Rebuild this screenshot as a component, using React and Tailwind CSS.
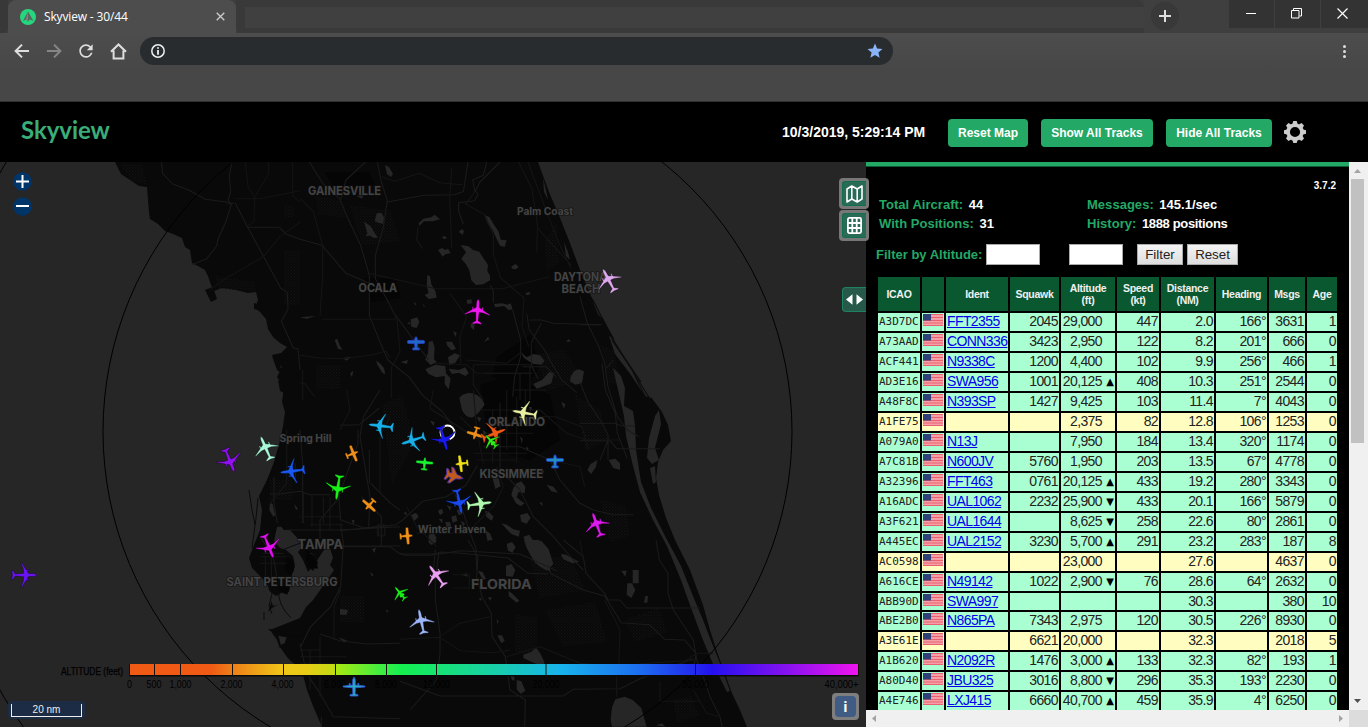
import React from "react";
import { MdRefresh, MdStar } from "react-icons/md";

const ROWS = [
  ["A3D7DC", "FFT2355", "2045", "29,000", "", "447", "2.0", "166°", "3631", "1"],
  ["A73AAD", "CONN336", "3423", "2,950", "", "122", "8.2", "201°", "666", "0"],
  ["ACF441", "N9338C", "1200", "4,400", "", "102", "9.9", "256°", "466", "1"],
  ["AD3E16", "SWA956", "1001", "20,125", "▲", "408", "10.3", "251°", "2544", "0"],
  ["A48F8C", "N393SP", "1427", "9,425", "", "103", "11.4", "7°", "4043", "0"],
  ["A1FE75", "", "", "2,375", "", "82", "12.8", "106°", "1253", "0"],
  ["A079A0", "N13J", "", "7,950", "", "184", "13.4", "320°", "1174", "0"],
  ["A7C81B", "N600JV", "5760", "1,950", "", "203", "13.5", "67°", "4778", "0"],
  ["A32396", "FFT463", "0761", "20,125", "▲", "433", "19.2", "280°", "3343", "0"],
  ["A16ADC", "UAL1062", "2232", "25,900", "▼", "433", "20.1", "166°", "5879", "0"],
  ["A3F621", "UAL1644", "", "8,625", "▼", "258", "22.6", "80°", "2861", "0"],
  ["A445EC", "UAL2152", "3230", "5,700", "▲", "291", "23.2", "283°", "187", "8"],
  ["AC0598", "", "", "23,000", "", "", "27.6", "", "4637", "0"],
  ["A616CE", "N49142", "1022", "2,900", "▼", "76", "28.6", "64°", "2632", "0"],
  ["ABB90D", "SWA997", "", "", "", "", "30.3", "", "380", "10"],
  ["ABE2B0", "N865PA", "7343", "2,975", "", "120", "30.5", "226°", "8930", "0"],
  ["A3E61E", "", "6621", "20,000", "", "", "32.3", "", "2018", "5"],
  ["A1B620", "N2092R", "1476", "3,000", "▲", "133", "32.3", "82°", "193", "1"],
  ["A80D40", "JBU325", "3016", "8,800", "▼", "296", "35.3", "193°", "2230", "0"],
  ["A4E746", "LXJ415", "6660", "40,700", "▲", "459", "35.9", "4°", "6250", "0"],
];

const HEADS = [["ICAO"], [""], ["Ident"], ["Squawk"], ["Altitude", "(ft)"], ["Speed", "(kt)"], ["Distance", "(NM)"], ["Heading"], ["Msgs"], ["Age"]];
const GRID = "grid grid-cols-[42px_22px_62px_49px_54px_42px_53px_51px_36px_30px] gap-x-[2px]";

const JET =
  "M0,-13 C1.1,-12 1.5,-10 1.5,-8 L1.6,-4.6 L4.2,-3 L4.2,-5 L5.5,-5 L5.5,-2.1 L12.6,2.2 L12.6,3.2 L5.5,.6 L1.7,.4 L1.1,8.8 L4.6,10.9 L4.6,12.2 L0,11.6 L-4.6,12.2 L-4.6,10.9 L-1.1,8.8 L-1.7,.4 L-5.5,.6 L-12.6,3.2 L-12.6,2.2 L-5.5,-2.1 L-5.5,-5 L-4.2,-5 L-4.2,-3 L-1.6,-4.6 L-1.5,-8 C-1.5,-10 -1.1,-12 0,-13Z";
const PROP =
  "M-.7,-6.5 L.7,-6.5 L1.5,-3.2 L8,-3 L8.7,-1.8 L8.2,-.2 L1.5,.2 L1,4.2 L3.2,4.6 L3.2,6.4 L-3.2,6.4 L-3.2,4.6 L-1,4.2 L-1.5,.2 L-8.2,-.2 L-8.7,-1.8 L-8,-3 L-1.5,-3.2Z";
const FIGHTER =
  "M0,-9.5 L1.6,-6 L2.2,-2.5 L8,2.4 L8,4.6 L2.6,2.8 L2.2,5 L5.4,7 L5.4,9 L0,7.6 L-5.4,9 L-5.4,7 L-2.2,5 L-2.6,2.8 L-8,4.6 L-8,2.4 L-2.2,-2.5 L-1.6,-6Z";
const BIZJET =
  "M0,-8.5 L1,-6 L1.1,-2 L8.6,1.6 L8.6,2.6 L1.2,.9 L2.6,2.2 L2.6,4.4 L1.1,4.4 L1,6 L3.6,7.2 L3.6,8.3 L0,7.6 L-3.6,8.3 L-3.6,7.2 L-1,6 L-1.1,4.4 L-2.6,4.4 L-2.6,2.2 L-1.2,.9 L-8.6,2.6 L-8.6,1.6 L-1.1,-2 L-1,-6Z";
const TWIN =
  "M0,-9.5 L1.2,-7 L1.3,-1.4 L3.8,-1.2 L3.8,-3 L4.8,-3 L4.8,-1.1 L11,-.4 L11,.4 L4.8,1 L1.3,1.2 L1.1,7.6 L4,8.2 L4,9.4 L0,9.6 L-4,9.4 L-4,8.2 L-1.1,7.6 L-1.3,1.2 L-4.8,1 L-11,.4 L-11,-.4 L-4.8,-1.1 L-4.8,-3 L-3.8,-3 L-3.8,-1.2 L-1.3,-1.4 L-1.2,-7Z";

const PLANES = [
  [JET, 477.5, 312, 3, "#f016f0"],
  [PROP, 416, 343.5, 0, "#2068c8", "#2a40c0"],
  [JET, 609, 280.5, 332, "#e0a8ee"],
  [JET, 525, 413, 280, "#e8f0a0"],
  [JET, 381.5, 426, 277, "#18b0e8"],
  [JET, 413.5, 440, 252, "#18b0e8"],
  [JET, 443.5, 438, 164, "#1818f0"],
  [PROP, 475.5, 433, 197, "#f09018"],
  [JET, 493.5, 434, 69, "#f05a14"],
  [BIZJET, 491, 441, 318, "#30f018"],
  [PROP, 424.5, 464, 5, "#18f030"],
  [PROP, 462, 463.5, 262, "#f0e018"],
  [FIGHTER, 454, 476, 105, "#c05a1c", "#5030a0"],
  [JET, 459, 501, 168, "#1848f0"],
  [JET, 479, 504, 82, "#b0f8b0"],
  [PROP, 555, 461.5, 0, "#2090c0", "#2040c8"],
  [JET, 597, 525, 340, "#e018f0"],
  [PROP, 406, 536, 85, "#f09018"],
  [PROP, 370, 504.5, 222, "#f09018"],
  [PROP, 352, 454, 68, "#f09018"],
  [JET, 338, 487, 188, "#18f018"],
  [JET, 293, 471, 263, "#1858f0"],
  [JET, 266, 448.5, 336, "#a8f8d8"],
  [JET, 229.5, 460, 158, "#9010f0"],
  [JET, 268.5, 546, 158, "#e010f0"],
  [JET, 24, 575, 90, "#6a14f0"],
  [JET, 437, 576, 324, "#eaa0f0"],
  [JET, 421.5, 622, 348, "#9cb4f8"],
  [BIZJET, 400, 593, 320, "#18f018"],
  [TWIN, 354, 686.5, 0, "#28b0c0", "#3058d8"],
];

const LABELS = [
  ["GAINESVILLE", 308, 195, 73, 12],
  ["Palm Coast", 517, 215, 56, 10],
  ["OCALA", 358.5, 292, 38.5, 12],
  ["DAYTONA", 554, 281, 53, 11.5],
  ["BEACH", 561.5, 293, 39, 11.5],
  ["ORLANDO", 488, 426, 57, 12],
  ["KISSIMMEE", 479.5, 478, 63.5, 12],
  ["Spring Hill", 279.5, 442, 52, 10],
  ["Winter Haven", 418, 533, 68, 10.5],
  ["TAMPA", 297.5, 549, 45.5, 13],
  ["SAINT PETERSBURG", 226.5, 586, 111, 11.5],
  ["FLORIDA", 471, 589, 60.5, 13.5],
];

const TICKS = [
  ["0", 129.5, 129.5],
  ["500", 154.5, 154],
  ["1,000", 180.5, 180.5],
  ["2,000", 232.5, 231.5],
  ["4,000", 283.5, 282.5],
  ["6,000", 335.5, 335],
  ["8,000", 386.5, 386],
  ["10,000", 436.5, 436.5],
  ["20,000", 546, 546],
  ["30,000", 695.5, 695.5],
  ["40,000+", 858.5, 841.5],
];

function MapDrawing() {
  return (
    <svg className="block h-[565px] w-[866px]" viewBox="0 162 866 565" fontFamily="Inter, sans-serif">
      <defs>
        <pattern id="marsh" width="3" height="3" patternUnits="userSpaceOnUse">
          <rect x="0" y="0" width="1" height="1" fill="#141414" />
          <rect x="1.5" y="1.5" width="1" height="1" fill="#121212" />
        </pattern>
        <linearGradient id="alt" gradientUnits="userSpaceOnUse" x1="129" y1="0" x2="858" y2="0">
          <stop offset="0" stopColor="#f05a14" />
          <stop offset=".112" stopColor="#f05a14" />
          <stop offset=".142" stopColor="#ee8018" />
          <stop offset=".212" stopColor="#f0c818" />
          <stop offset=".24" stopColor="#eacb16" />
          <stop offset=".282" stopColor="#c2dc14" />
          <stop offset=".286" stopColor="#a6ea12" />
          <stop offset=".353" stopColor="#34ee46" />
          <stop offset=".375" stopColor="#14f050" />
          <stop offset=".422" stopColor="#16e472" />
          <stop offset=".5" stopColor="#18d0a8" />
          <stop offset=".59" stopColor="#18b4ec" />
          <stop offset=".7" stopColor="#1c6ef0" />
          <stop offset=".78" stopColor="#2226ee" />
          <stop offset=".8" stopColor="#2410f0" />
          <stop offset=".9" stopColor="#8412f0" />
          <stop offset="1" stopColor="#f014ee" />
        </linearGradient>
      </defs>
      <rect y="162" width="866" height="565" fill="#262626" />
      {/* Peninsula */}
      <path
        fill="#090909"
        d="M115,162 L118,168 121,174 127,178 133,182 139,186 147,187 148,200 149,212 150,219 158,224 165,231 173,234 182,238 185,247 190,250 192,263 198,266 205,270 208,276 211,285 214,291 222,288 236,290 248,293 256,292 258,300 255,308 260,312 266,319 268,329 273,337 280,343 287,347 281,353 272,355 277,362 282,367 277,377 284,388 282,402 285,412 283,426 281,437 278,448 274,462 269,475 265,484 259,496 262,510 260,530 254,545 249,558 252,568 262,578 268,586 272,600 268,612 272,608 286,600 300,618 290,622 270,630 277,640 281,652 292,662 300,668 303,675 307,690 313,706 322,727 L747,727 740,710 728,685 718,655 710,630 703,605 690,570 675,540 666,518 659,495 656,478 658,462 663,450 671,441 668,425 662,412 648,393 635,374 622,352 612,335 600,313 591,296 580,270 570,243 560,218 549,192 538,162Z"
      />
      {/* Dotted marshland */}
      <g fill="url(#marsh)">
        <path d="M120,164 h22 l4,20 -14,-2z M350,205 l40,6 10,30 -38,4z M340,200 l-25,-4 3,18 30,4z M284,205 h10 v12 h-10z M284,250 h16 v55 h-16z M215,276 l40,6 v9 l-36,-2z M316,365 h24 v24 h-24z M545,240 l12,-18 2,40 -12,10z M382,405 l20,-10 12,46 -22,44z M534,355 l30,-5 20,30 -35,10z M575,395 l25,15 10,30 -25,10z M530,560 l40,-5 15,35 -45,8z M545,610 l50,-8 12,40 -44,4z M515,615 l22,2 v40 l-22,-5z M625,620 l34,-12 8,24 -32,10z M673,700 l18,-4 8,20 -22,6z M340,596 h24 v26 h-24z M600,345 l14,6 6,30 -10,4z M270,480 h22 v20 h-22z M600,500 l26,6 4,30 -20,6z" />
      </g>
      {/* Urban areas */}
      <g fill="#050505">
        <path d="M325,172 h44 l6,12 -40,6z M365,278 h30 l6,20 -30,4z M480,385 l30,-10 40,20 10,45 -30,20 -40,-10z M530,335 l10,30 -12,22 -36,-10 5,-20z" />
      </g>
      {/* Tampa Bay */}
      <path
        fill="#262626"
        d="M277,527 L284,530 290,530 300,541 304,545 298,552 303,560 308,572 313,566 309,558 308,552 315,555 316,562 324,550 330,548 333,558 330,565 334,570 326,582 313,600 306,607 300,618 288,610 281,604 273,606 268,590 276,596 283,592 289,592 292,575 295,566 293,556 286,550 280,548 274,541Z"
      />
      <path fill="#090909" d="M304,552 l11,3 3,8 -5,8 -7,-6z M279,585 l10,3 -5,6z" />
      <path fill="none" stroke="#0b0b0b" strokeWidth="1" d="M249,490 l3,20 3,15 M258,498 l-2,20 -4,30 M268,582 l4,12 -3,12 3,8 M279,590 q-2,14 12,28 M300,540 l40,-7 M277,552 l26,-10 M265,560 l2,16 M264,612 v8" />
      {/* Gulf coast marsh fringe */}
      <path fill="#090909" d="M205,290 l8,-3 4,12 -6,3z M254,303 l7,2 3,6 -10,-2z M272,356 l7,2 3,16 -5,-4z M278,380 l6,4 2,10 -6,-3z" />
      {/* East coast lagoons */}
      <g fill="#262626">
        <path d="M609,336 l6,3 16,25 19,26 1,8 -6,-2 -14,-21 -16,-21z" />
        <path d="M613,368 l8,8 4,12 -1,18 9,5 2,14 1,25 5,32 10,26 14,28 16,30 12,30 10,24 12,30 10,22 8,18 -6,2 -14,-28 -10,-24 -12,-32 -10,-28 -14,-34 -14,-26 -13,-28 -8,-30 -6,-26 -2,-20z" />
        <path d="M659,410 l2,14 -6,24 4,12 -7,4 -5,-6 2,-20 6,-22z M655,466 l1,16 -3,2 -3,-16z" />
        <path d="M594,298 l6,10 3,12 -5,-6 -5,-12z M564,242 l4,10 2,8 -4,-4z M543,178 l3,12 2,10 -4,-8z" />
      </g>
      <path fill="none" stroke="#0b0b0b" strokeWidth="1.2" d="M672,545 l16,32 12,24 8,30 14,36 12,34 M593,300 l22,44 26,38" />
      {/* Lakes, northern half */}
      <g transform="translate(300 160) scale(.33333)" fill="#262626">
        <path d="M255,15 l12,6 12,20 -6,10 -12,-8z M192,185 l20,14 12,20 10,14 -14,0 -10,-6 -12,2 4,-10z M230,160 l14,-2 8,14 -2,20 -14,-4 -12,-4z M170,108 l20,-4 -4,12z" />
        <path d="M552,165 l16,6 16,26 12,18 6,24 18,2 -6,20 -14,-4 -10,-20 -12,-26 -16,-22z M482,255 l24,4 12,10 20,6 14,22 12,18 -2,18 8,14 0,14 -20,12 -22,2 -14,-14 -6,-30 -10,-18 -14,-16 8,-12 6,-8z M414,270 l12,-6 10,6 8,-4 8,14 -14,2 -10,8z M476,215 l10,-8 6,6 -4,12z M634,320 l12,-8 10,8 -8,8 -12,-2z M425,232 l10,-4 6,6 -8,4z" />
        <path d="M356,190 l14,-14 24,-4 10,-8 16,14 -22,6 -26,0 -14,14z M382,345 l8,4 4,24 12,20 4,20 -24,4 -12,-12 12,-6 -6,-20z M500,420 l14,-2 2,12 -14,2z M332,478 l20,-6 6,14 -8,18 -16,-4z M386,545 l12,-2 6,20 -2,34 8,10 -18,8 -16,-16 8,-20z M438,545 l18,0 12,22 -14,4 -12,-14z M444,592 l20,-12 16,6 -14,22 -18,8z M376,628 l30,-14 30,4 2,22 14,16 -6,32 -12,-16 0,-24 -26,4 -22,-10z M446,626 l30,4 20,-8 10,18 -10,8 -20,-10 -20,4z M486,706 l24,-8 20,14 6,10 h-54z M552,546 l12,-16 4,8z M512,490 l12,0 -2,20 -10,-8z" />
        <path d="M582,432 l24,-2 16,4 10,-4 6,18 -12,2 -14,-12 -26,4z M662,576 l18,16 20,-10 20,4 14,16 -10,12 -24,-2 -16,-10 -12,-8z M700,672 l26,-12 22,-24 14,2 -8,32 -20,8 -24,8z M812,650 l10,-16 14,-6 16,6 -6,36 -20,4 -16,-10z M228,602 l10,6 14,16 4,18 -8,-2 -16,-26z M676,400 l12,-4 4,6 -12,4z M798,545 l8,-8 6,8z" />
        <path d="M104,540 l8,-4 8,22 8,12 -14,-4z M128,594 l26,-4 -14,12z M302,606 l22,-6 -4,12z M150,640 l10,-8 -4,20z M322,490 l8,-4 2,8z M368,430 l8,12 -6,-4z M340,426 l10,6 -4,4z M460,514 l10,4 -4,14z M0,472 l18,-2 30,-2 -28,8z" />
      </g>
      {/* Lakes, central */}
      <g transform="translate(340 390) scale(.33333)" fill="#262626">
        <path d="M358,24 q8,-16 40,-14 q28,8 36,34 q-16,24 -34,38 q-22,4 -34,-22z M530,280 l14,-6 12,16 -2,20 -18,-4 -6,16 14,12 10,6 -12,8 -14,-8 -14,-26 6,-20z M458,265 l18,0 6,24 -16,8z M540,375 l22,-6 10,14 -12,18 -16,-6z M484,400 l16,4 20,14 20,4 -4,18 -22,-8 -14,-14z M550,440 l18,-6 12,18 24,0 22,26 14,44 -20,20 -26,-16 -24,-34z M500,462 l16,-6 10,14 -8,18 -14,-6z M664,492 l14,2 40,22 -20,4 -28,-12z M742,240 l10,-18 20,-12 -4,20 -14,22z M806,210 l20,-4 14,14 v20 l-20,-6z M435,362 l12,4 14,14 -6,12 -16,-12z M436,420 l14,10 8,20 -16,2z M266,436 l14,-8 10,16 -14,22 -10,-8z" />
        <path d="M294,362 l12,-6 4,12 -10,8z M320,346 l14,4 -4,12z M334,380 l14,-4 4,16 -14,6z M296,386 l12,2 -2,12z M316,396 l14,0 4,14 -14,4z M350,360 l12,-2 6,14 -12,4z M212,376 l16,-8 8,12 -14,14z M362,394 l12,4 -2,14z M600,238 l12,4 -4,14z M620,284 l20,6 14,18 -20,-4z M558,170 l8,4 -4,8z M598,340 l8,-4 2,12z M270,92 l14,4 -4,12z M372,54 l12,2 -4,14z M540,140 l8,6 -2,16z M664,36 l12,6 -4,14z M566,50 l10,2 -4,14z M410,80 l14,4 -6,12z M428,120 l12,8 -8,10z M96,478 l10,-4 -2,14z M190,370 l8,-4 4,10z" />
      </g>
      {/* Lakes, southern half */}
      <g transform="translate(400 540) scale(.33333)" fill="#262626">
        <path d="M372,0 h44 l14,30 18,46 4,24 -20,-26 -26,-4 -14,-24 -12,-22z M484,42 l24,10 28,14 -20,0 -30,-14z M318,78 l16,-6 12,18 -8,20 -20,-2z M664,92 l16,0 -4,18z M698,90 h18 v40 h-18z M682,130 l14,0 10,20 -12,24 -14,-10z M736,168 h8 l-2,20 h-10z M325,10 l14,0 8,14 -12,10 -10,-10z M88,0 h22 l-4,10 h-14z M184,104 l16,-4 4,10z M326,152 l12,10 20,20 -8,6 -24,-20z M292,286 l14,0 8,16 -10,8z M370,344 l24,-8 14,-14 14,20 12,26 -8,10 -26,-10 -30,-14z M632,540 l4,-38 10,-24 28,-8 24,10 26,24 16,56 h-104z M350,420 l14,4 12,28 -14,10 -12,-14z M332,408 l10,0 2,14 -8,-2z M264,172 l12,0 -6,10z M768,556 l18,-6 10,10z M234,92 l14,4 10,20 -10,4z M290,238 l6,6 -4,8z M236,176 l10,-2 -4,8z" />
      </g>
      {/* Small waters near Tampa */}
      <g transform="translate(0 430) scale(.33333)" fill="#262626">
        <path d="M810,218 l8,4 8,34 -6,4 -12,-20z M882,222 l12,14 -6,4z M1054,268 l10,4 -4,12z M1020,536 l24,4 -4,14 -20,0z M1118,358 l10,-4 -6,14z M1110,426 l10,8 -4,6z M1016,622 l26,10 -10,6z M1156,540 l10,2 -4,6z M832,290 l12,0 10,14 18,10 8,10 -30,0 -14,-8z M836,618 l24,4 -6,18 -12,4z M828,650 l14,4 28,40 -10,4 -24,-28z" />
        <path fill="#050505" d="M920,356 l30,40 4,20 -30,-4 -6,-20z M858,382 l22,10 2,30 -14,14 -14,-20z M834,468 l34,4 -6,22 -24,-10z" />
        <path fill="none" stroke="#090909" strokeWidth="4" d="M806,598 l22,6 40,14 30,-2 40,-8 30,-6 M880,604 l30,-14 20,-14" />
      </g>
      {/* Roads */}
      <g fill="none" stroke="#1b1b1b" strokeWidth="3.2" strokeLinejoin="round">
        <g transform="translate(0 160) scale(.33333)">
          <path d="M484,6 l4,34 30,32 48,18 50,28 62,8 14,6 10,-4 M696,6 l-8,40 4,50 -8,24 10,14 -16,50 -24,54 -4,20 -30,38 -44,18 M706,130 l34,66 102,188 20,14 2,50 -20,36 36,80 14,2 6,64 M740,202 h98 l20,20 42,16" />
          <path stroke="#131313" d="M706,116 h74 l120,-24 M736,6 l8,74 20,30 -2,76 -20,12 M806,6 v36 l-40,66 M878,6 v100 l22,20 M900,186 l-60,44 -50,60 -120,70 -40,30" />
        </g>
        <g transform="translate(300 160) scale(.33333)">
          <path d="M28,6 l40,64 52,48 24,58 38,80 26,90 0,120 32,80 24,54 64,52 40,54 60,50 34,44 M232,6 l12,60 18,56 -12,80 -24,84 v70 l34,60 20,40 36,50 70,94 M0,238 l66,18 72,84 70,30 M196,6 l-58,54 -16,58 M262,126 l110,-20 92,-2 28,-10 M504,6 l-14,90 M560,6 l-10,40 -32,14 6,30 10,12 -10,20 -48,6 0,26 14,38 M600,6 l-60,60 -16,30" />
          <path stroke="#151515" d="M0,115 l40,40 28,102 0,90 -8,120 M244,50 l40,14 74,-24 60,28 70,6 M455,24 l-6,90 6,150 M494,130 l60,34 26,60 0,60 22,70 70,60 -6,86 20,60 M524,96 l-26,34 M290,470 l10,104 -26,50 0,90 M0,586 l60,8 70,2 80,-10 48,-12 14,20 M208,340 l200,46 200,0 140,-36 M8,630 v90 M0,670 h14 l30,40 M66,478 h220 v-14 M450,400 l50,70 -20,60 2,80 M656,6 l40,80 18,120 100,110 M684,6 l60,160 40,100 30,60 M712,206 l-2,70 M500,600 l120,10 40,-30 M400,610 l100,4 30,26 160,0" />
          <path d="M570,374 l10,20 0,34 M638,450 l24,90 0,50 -18,60 -6,60 M680,460 l8,50 46,60 20,38 30,50 46,40 M688,480 h36 l36,10 140,4 M724,490 l-30,56 0,70 20,40 M668,620 h70 l30,30" />
          <path stroke="#171717" d="M520,614 h180 M520,614 v60 l30,46 M548,640 h150 M660,640 v80 M690,620 v100 M640,690 h100 M354,200 l-4,40 18,26" />
        </g>
        <g transform="translate(580 160) scale(.33333)">
          <path d="M0,410 l22,80 32,64 20,56 10,70 28,90 30,40 34,20 M0,494 h66 M66,610 l10,80 30,70 6,60 30,76 M0,666 l24,60 40,60 20,40 0,74 M0,790 h106 l20,8 h40 M0,842 h90 l20,24 h130 M100,600 l-20,24 M84,840 l-24,60" />
          <path stroke="#0c0c0c" d="M22,414 l50,80 80,130 56,90 M96,540 l60,90 40,80" />
        </g>
        <g transform="translate(340 390) scale(.33333)">
          <path d="M0,106 l58,-2 60,-50 M270,56 l80,50 60,40 M412,226 l-34,60 -60,34 -70,14 -60,56 -20,14 -168,18 M336,296 l30,60 20,60 22,60 2,64 M0,470 h150 l30,22 h120 l60,-10 180,10 110,50 M120,0 l-50,80 -10,60 30,180 -4,90 M480,40 l0,200 60,60 40,80 60,60 60,70 30,30 M430,170 h110 l90,40 30,60 60,70 40,20 60,14 h60 M286,478 l-6,62 M124,470 v-90 l-60,-60" />
          <path stroke="#151515" d="M400,0 l10,120 20,100 M458,60 v160 M500,0 v180 M530,20 v200 M556,0 v100 M432,100 h170 M420,60 h180 M440,130 h140 M400,190 h160 M410,210 h120 M360,80 l40,40 M600,60 l80,70 60,20 100,0 M606,80 h40 l80,30 20,70 M150,80 l-30,60 0,170 M630,210 l90,20 14,60 M112,404 h22 v32 h-22z M200,350 l30,60 60,60 M230,430 h160 M20,0 l10,60 -30,60 M280,0 l-10,56 M470,230 l20,60 -30,60 -60,60" />
        </g>
        <g transform="translate(0 430) scale(.33333)">
          <path d="M810,192 h30 l60,-8 30,10 h60 M1074,0 v40 l-22,60 -36,100 6,70 70,24 66,-6 M1020,200 l-60,70 0,56 M1022,280 l8,60 -8,130 -30,60 -60,60 -30,60 M900,0 l8,100 0,180 M886,100 v60 M860,300 h160 l180,-10 M1022,348 h178 M822,140 v80 l10,60 M780,320 l40,60 10,60 M790,370 h60 M1108,160 v-100 M1112,160 l60,60 28,20 M1200,640 l-100,2 -80,-10 -60,-20 M900,640 l20,90 40,60 40,70 200,6 M964,860 v30" />
          <path stroke="#161616" d="M910,190 v90 M936,190 v100 M970,200 v80 M990,200 v100 M900,260 h120 M930,284 h100 M780,380 h80 M780,400 h80 M796,380 v70 M814,370 v90 M960,620 v180 M900,660 h60 M900,680 h140 M900,700 h120 M930,660 v120 M1022,480 l-20,50 0,100 M1136,284 h18 v34 h-18z M860,0 v160 l-50,60" />
        </g>
        <g transform="translate(400 540) scale(.33333)">
          <path d="M0,40 l14,6 h80 l30,-10 60,4 140,14 60,46 60,2 M204,0 l30,50 -4,60 16,60 28,50 2,70 40,60 14,100 46,30 -2,80 M116,40 l-10,80 0,60 14,100 0,60 -10,80 -80,90 M450,100 l100,50 64,18 50,80 84,6 46,44 60,2 34,40 -6,40 M490,0 l60,50 8,50 56,60 10,20 36,0 20,24 h220 M768,0 l10,60 26,40 0,60 16,50 60,90 10,60 20,50 20,60 30,60 10,50 M0,424 l120,44 h370 l30,-20 140,-2 60,-30 160,-60" />
          <path stroke="#151515" d="M120,290 l60,-40 90,-20 M0,298 l120,-6 60,40 100,6 50,-8 M614,180 l46,90 -4,110 M320,350 l100,-30 120,50 110,10 v90 M650,380 l90,-10 150,-10 M540,0 l10,60 M158,104 h50 v40 h-50 M860,360 l30,-20 h50 M780,424 v60 h120 M880,450 l40,70 40,10" />
        </g>
      </g>
      {/* Range rings */}
      <g fill="none" stroke="#000" strokeWidth="1">
        <circle cx="447.5" cy="431.5" r="344.5" />
        <circle cx="447.5" cy="431.5" r="517" />
      </g>
      {/* Place names */}
      {LABELS.map(([t, x, y, w, s]) => (
        <text key={t} x={x} y={y} fontSize={s} fontWeight="700" textLength={w} lengthAdjust="spacingAndGlyphs" fill="#444" stroke="#101010" strokeWidth="1.6" strokeOpacity=".7" paintOrder="stroke">
          {t}
        </text>
      ))}
      {/* Altitude legend */}
      <g fontFamily="Liberation Sans Narrow, Liberation Sans, sans-serif" fontSize="10">
        <rect x="129" y="664" width="730" height="12.5" fill="#0a0a0a" />
        <rect x="129.5" y="664" width="728.5" height="11" fill="url(#alt)" />
        {TICKS.map(([t, x, c]) => (
          <g key={t}>
            <rect x={x - 0.5} y="664" width="1" height="12" fill="#161208" />
            <text x={c} y="688" textAnchor="middle" textLength={t.length < 4 ? t.length * 5 : t.length * 5 - 3 + (t.length > 6 ? 2 : 0)} lengthAdjust="spacingAndGlyphs" fill="#000">
              {t}
            </text>
          </g>
        ))}
        <text x="61" y="675" textLength="62" lengthAdjust="spacingAndGlyphs" fill="#000" stroke="#000" strokeWidth=".25">
          ALTITUDE (feet)
        </text>
      </g>
      <circle cx="447.5" cy="432.5" r="7" fill="none" stroke="#fff" strokeWidth="1.8" />
      {/* Aircraft */}
      {PLANES.map(([d, x, y, a, fill, line], i) => (
        <path key={i} d={d} transform={`translate(${x} ${y}) rotate(${a})`} fill={fill} stroke={line || "#000"} strokeWidth={line ? 0.9 : 0.35} />
      ))}
    </svg>
  );
}

function Flag() {
  return (
    <svg className="mt-[1px] ml-[1px] h-3 w-5" viewBox="0 0 20 12">
      <rect width="20" height="12" fill="#f4a0a8" />
      <path d="M0,.5H20M0,3.5H20M0,6.5H20M0,9H20M0,11.5H20" stroke="#ec6070" strokeWidth="1" />
      <rect width="8" height="6.5" fill="#2f3f78" />
    </svg>
  );
}

function Row({ r }) {
  const [icao, ident, squawk, alt, trend, speed, dist, head, msgs, age] = r;
  const tone = ident ? "bg-[#aaffd2]" : "bg-[#fffec0]";
  const cell = `${tone} overflow-hidden whitespace-nowrap`;
  const num = `${cell} text-right pr-[1px]`;
  return (
    <div className={`${GRID} ${icao === "ABB90D" ? "h-[17px]" : "h-[18px]"} shrink-0 text-[14px] leading-[17px] tracking-[-0.6px] text-[#222]`}>
      <div className={`${cell} pl-px font-['DejaVu_Sans_Mono',monospace] text-[11px] leading-[18px] tracking-normal`}>{icao}</div>
      <div className={cell}><Flag /></div>
      <div className={`${cell} pl-px text-[#0000ee] underline`}>{ident}</div>
      <div className={num}>{squawk}</div>
      <div className={`${cell} flex justify-end`}>
        <span>{alt}</span>
        <span className="w-[13px] pr-px text-right font-['DejaVu_Sans',sans-serif] text-[10px] tracking-normal text-black">{trend}</span>
      </div>
      <div className={num}>{speed}</div>
      <div className={num}>{dist}</div>
      <div className={num}>{head}</div>
      <div className={num}>{msgs}</div>
      <div className={num}>{age}</div>
    </div>
  );
}

function Chrome() {
  return (
    <div className="flex h-[102px] flex-col border-b border-[#303030] bg-[#474747]">
      <div className="flex h-[33px] bg-[#3d3d3d]">
        <div className="w-2 rounded-br-md bg-[#383838]" />
        <div className="flex w-[228px] items-center rounded-t-lg bg-[#4d4d4d] pr-[11px] pl-3">
          <svg className="h-4 w-4" viewBox="0 0 16 16">
            <circle cx="8" cy="8" r="8" fill="#25d67e" />
            <path d="M8,2.5 L3,12 6,10.5 8,12.5 10,10.5 13.5,12Z" fill="#59675f" />
            <path d="M8,2.5 L6,10 8,12Z" fill="#8b7f86" />
          </svg>
          <span className="ml-2 flex-1 font-['Open_Sans',sans-serif] text-[12px] leading-4 tracking-[-0.15px] text-white">Skyview - 30/44</span>
          <svg className="h-[9px] w-[9px]" viewBox="0 0 9 9"><path d="M.7,.7 L8.3,8.3 M8.3,.7 L.7,8.3" stroke="#c8c8c8" strokeWidth="1.4" /></svg>
        </div>
        <div className="flex w-[908px] items-center rounded-tr-lg rounded-bl-md bg-[#393939] pl-[9px]">
          <div className="mt-[2px] h-[21px] w-full bg-[#404040]" />
        </div>
        <div className="flex flex-1 justify-between bg-[#3f3f3f]">
          <div className="mt-[2px] ml-[7px] flex h-7 w-7 items-center justify-center rounded-full bg-[#393939]">
            <svg className="h-3 w-3" viewBox="0 0 12 12"><path d="M6,0V12M0,6H12" stroke="#dedede" strokeWidth="2" /></svg>
          </div>
          <div className="flex h-7 gap-px">
            <div className="flex w-[45px] items-center bg-[#333] pl-[17px]"><div className="mt-[-1px] h-px w-[10px] bg-white" /></div>
            <div className="flex w-[45px] items-center bg-[#333] pl-4">
              <svg className="mt-[-2px] h-[11px] w-[11px]" viewBox="0 0 11 11"><path d="M.5,2.5h7.5v7.5H.5z M2.5,2.5V.5H10.5V8H8.5" fill="none" stroke="#fff" /></svg>
            </div>
            <div className="flex w-[47px] items-center bg-[#333] pl-4">
              <svg className="mt-[-2px] h-[11px] w-[11px]" viewBox="0 0 11 11"><path d="M.5,.5 L10.5,10.5 M10.5,.5 L.5,10.5" stroke="#fff" strokeWidth="1.2" /></svg>
            </div>
          </div>
        </div>
      </div>
      <div className="flex h-9 items-center bg-gradient-to-b from-[#4d4d4d] to-[#474747] pl-[14px]">
        <svg className="h-4 w-4" viewBox="0 0 16 16" fill="none" stroke="#dedede" strokeWidth="2"><path d="M15,8H2.2M8,1.6L1.6,8 8,14.4" /></svg>
        <svg className="ml-4 h-4 w-4" viewBox="0 0 16 16" fill="none" stroke="#868686" strokeWidth="2"><path d="M1,8H13.8M8,1.6L14.4,8 8,14.4" /></svg>
        <MdRefresh className="ml-[14px] h-5 w-5 text-[#dedede]" />
        <svg className="ml-[14px] h-[17px] w-[17px]" viewBox="0 0 17 17" fill="none" stroke="#dedede" strokeWidth="2"><path d="M1,8.8L8.5,1.5 16,8.8M3.6,7.5V15.5H13.4V7.5" /></svg>
        <div className="ml-[13px] flex h-7 w-[753px] items-center justify-between rounded-full bg-[#282c2f] pr-[9px] pl-[11px]">
          <svg className="h-[14px] w-[14px]" viewBox="0 0 14 14"><circle cx="7" cy="7" r="6.2" fill="none" stroke="#f0f0f0" strokeWidth="1.5" /><path d="M7,3.2V4.8M7,6V10.8" stroke="#f0f0f0" strokeWidth="1.8" /></svg>
          <MdStar className="h-[18px] w-[18px] text-[#8ab4f8]" />
        </div>
        <div className="ml-auto flex w-[25px] flex-col gap-[2px]">
          <div className="h-[3px] w-[3px] rounded-full bg-[#dedede]" />
          <div className="h-[3px] w-[3px] rounded-full bg-[#dedede]" />
          <div className="h-[3px] w-[3px] rounded-full bg-[#dedede]" />
        </div>
      </div>
    </div>
  );
}

const BTN = "flex h-7 items-center justify-center rounded-[4px] bg-[#24a866] text-[12px] font-bold text-white";

export default function App() {
  return (
    <div className="h-[727px] w-[1368px] overflow-hidden bg-black font-['Liberation_Sans',Arial,sans-serif]">
      <Chrome />
      <header className="flex h-[60px] items-center bg-black pl-[21px]">
        <div className="mb-[4px] w-[761px] font-['Lato',sans-serif] text-[24px] font-bold leading-none tracking-[-0.05px] text-[#3aad78]">Skyview</div>
        <div className="w-[166px] text-[14px] font-bold text-white">10/3/2019, 5:29:14 PM</div>
        <div className={`${BTN} mt-[2px] w-20`}>Reset Map</div>
        <div className={`${BTN} mt-[2px] ml-[13px] w-28`}>Show All Tracks</div>
        <div className={`${BTN} mt-[2px] ml-[13px] w-[106px]`}>Hide All Tracks</div>
        <svg className="ml-3 h-[22px] w-[22px]" viewBox="-11 -11 22 22">
          <circle r="6.9" fill="none" stroke="#ccc" strokeWidth="3.6" />
          {[0, 45, 90, 135, 180, 225, 270, 315].map((a) => (
            <path key={a} d="M-2.6,-8 L-1.7,-11 H1.7 L2.6,-8Z" transform={`rotate(${a})`} fill="#ccc" />
          ))}
        </svg>
      </header>
      <div className="flex h-[565px]">
        <main className="relative w-[866px] shrink-0">
          <MapDrawing />
          <div className="absolute top-[10px] left-[13px] flex flex-col gap-[6px]">
            <svg className="h-[19px] w-[19px]" viewBox="0 0 19 19"><circle cx="9.5" cy="9.5" r="9.2" fill="#00356a" /><path d="M9.5,3V16M3,9.5H16" stroke="#fff" strokeWidth="2" /></svg>
            <svg className="h-[19px] w-[19px]" viewBox="0 0 19 19"><circle cx="9.5" cy="9.5" r="9.2" fill="#00356a" /><path d="M3,9H16" stroke="#fff" strokeWidth="2" /></svg>
          </div>
          <div className="absolute top-4 left-[839px] z-10 flex flex-col gap-px">
            <div className="h-[31px] w-[30px] rounded-[4px] bg-[#777] p-[3px]">
              <div className="flex h-[25px] w-6 items-center justify-center rounded-l-[3px] border border-r-0 border-[#0f6e4c] bg-[#2a6b57]">
                <svg className="h-[18px] w-[17px]" viewBox="0 0 17 18" fill="none" stroke="#fff" strokeWidth="1.6" strokeLinejoin="round"><path d="M1,4L5.8,1 11.2,4 16,1V14L11.2,17 5.8,14 1,17ZM5.8,1V14M11.2,4V17" /></svg>
              </div>
            </div>
            <div className="h-[31px] w-[30px] rounded-[4px] bg-[#777] p-[3px]">
              <div className="flex h-[25px] w-6 items-center justify-center rounded-l-[3px] border border-r-0 border-[#0f6e4c] bg-[#2a6b57]">
                <svg className="h-[17px] w-[15px]" viewBox="0 0 15 17" fill="none" stroke="#fff" strokeWidth="1.8"><rect x=".9" y=".9" width="13.2" height="15.2" rx="1.5" /><path d="M5.3,1V16M9.7,1V16M1,6H14M1,11H14" /></svg>
              </div>
            </div>
          </div>
          <div className="absolute top-[125px] left-[842px] flex h-[25px] w-6 items-center justify-center rounded-l-sm border border-r-0 border-[#1c8260] bg-[#26594a]">
            <svg className="h-[11px] w-[17px]" viewBox="0 0 17 11" fill="#fff"><path d="M0,5.5L6.5,.3V10.7ZM17,5.5L10.5,.3V10.7Z" /></svg>
          </div>
          <div className="absolute top-[539px] left-2 h-[18px] w-[77px] rounded-[4px] bg-[#1b2c44] px-[3px] py-[3px]">
            <div className="h-[13px] w-[71px] border border-t-0 border-[#eee] text-center text-[10px] leading-[11px] text-[#eee]">20 nm</div>
          </div>
          <div className="absolute top-[531px] left-[832px] h-[27px] w-[27px] rounded-[4px] bg-[#7e7e7e] p-[3px]">
            <div className="flex h-[21px] w-[21px] items-center justify-center rounded-sm bg-[#405c84] font-['Open_Sans',sans-serif] text-[14px] font-bold leading-none text-white">i</div>
          </div>
        </main>
        <aside className="flex h-[565px] w-[483px] shrink-0 flex-col bg-black">
          <div className="flex h-[548px] flex-col overflow-hidden border-t-4 border-[#24a866]">
            <div className="h-px shrink-0 bg-[#0d5a35]" />
            <div className="mt-[12px] h-[13px] shrink-0 pr-[13px] text-right text-[10px] font-bold leading-[13px] text-white">3.7.2</div>
            <div className="mt-[3px] grid shrink-0 grid-cols-[208px_1fr] pl-[13px] text-[13px] font-bold leading-[19px] text-white">
              <div><span className="mr-[2px] tracking-[0.03px] text-[#24a866]">Total Aircraft:</span> 44</div>
              <div><span className="mr-[2px] tracking-[0.03px] text-[#24a866]">Messages:</span> 145.1/sec</div>
              <div><span className="mr-[2px] tracking-[0.03px] text-[#24a866]">With Positions:</span> 31</div>
              <div><span className="mr-[2px] tracking-[0.03px] text-[#24a866]">History:</span> <span className="tracking-[-0.35px]">1888 positions</span></div>
            </div>
            <div className="mt-[11px] flex h-[21px] shrink-0 items-center pl-[10px]">
              <div className="w-[110px] whitespace-nowrap text-[13px] font-bold text-[#24a866]">Filter by Altitude:</div>
              <div className="h-[21px] w-[54px] border border-[#aaa] bg-white" />
              <div className="ml-[29px] h-[21px] w-[54px] border border-[#aaa] bg-white" />
              <div className="ml-[14px] flex h-[21px] w-[46px] items-center justify-center border border-[#aaa] bg-gradient-to-b from-[#f4f4f4] to-[#dedede] text-[13.3px] text-[#222]">Filter</div>
              <div className="ml-1 flex h-[21px] w-[51px] items-center justify-center border border-[#aaa] bg-gradient-to-b from-[#f4f4f4] to-[#dedede] text-[13.3px] text-[#222]">Reset</div>
            </div>
            <div className="mt-3 flex flex-col gap-[2px] pl-3">
              <div className={`${GRID} h-[34px] shrink-0 text-center text-[10.5px] font-bold leading-[12px] tracking-[-0.3px] text-[#f0f0f0]`}>
                {HEADS.map((h, i) => (
                  <div key={i} className="flex flex-col items-center justify-center bg-[#0a5830]">
                    {h.map((l) => <span key={l}>{l}</span>)}
                  </div>
                ))}
              </div>
              {ROWS.map((r) => <Row key={r[0]} r={r} />)}
            </div>
          </div>
          <div className="flex h-[17px] items-center justify-between bg-[#f0f0f0] px-[6px]">
            <svg className="h-[7px] w-1" viewBox="0 0 4 7"><path d="M4,0V7L0,3.5Z" fill="#a3a3a3" /></svg>
            <svg className="h-[7px] w-1" viewBox="0 0 4 7"><path d="M0,0V7L4,3.5Z" fill="#a3a3a3" /></svg>
          </div>
        </aside>
        <div className="flex flex-1 flex-col">
          <div className="flex h-[548px] flex-col bg-[#f0f0f0]">
            <svg className="mt-[7px] ml-[5px] h-1 w-[7px]" viewBox="0 0 7 4"><path d="M0,4H7L3.5,0Z" fill="#a3a3a3" /></svg>
            <div className="mt-[6px] ml-[2px] h-[264px] w-[13px] bg-[#c1c1c1]" />
            <svg className="mt-auto mb-[7px] ml-[5px] h-1 w-[7px]" viewBox="0 0 7 4"><path d="M0,0H7L3.5,4Z" fill="#505050" /></svg>
          </div>
          <div className="flex-1 bg-[#dcdcdc]" />
        </div>
      </div>
    </div>
  );
}
